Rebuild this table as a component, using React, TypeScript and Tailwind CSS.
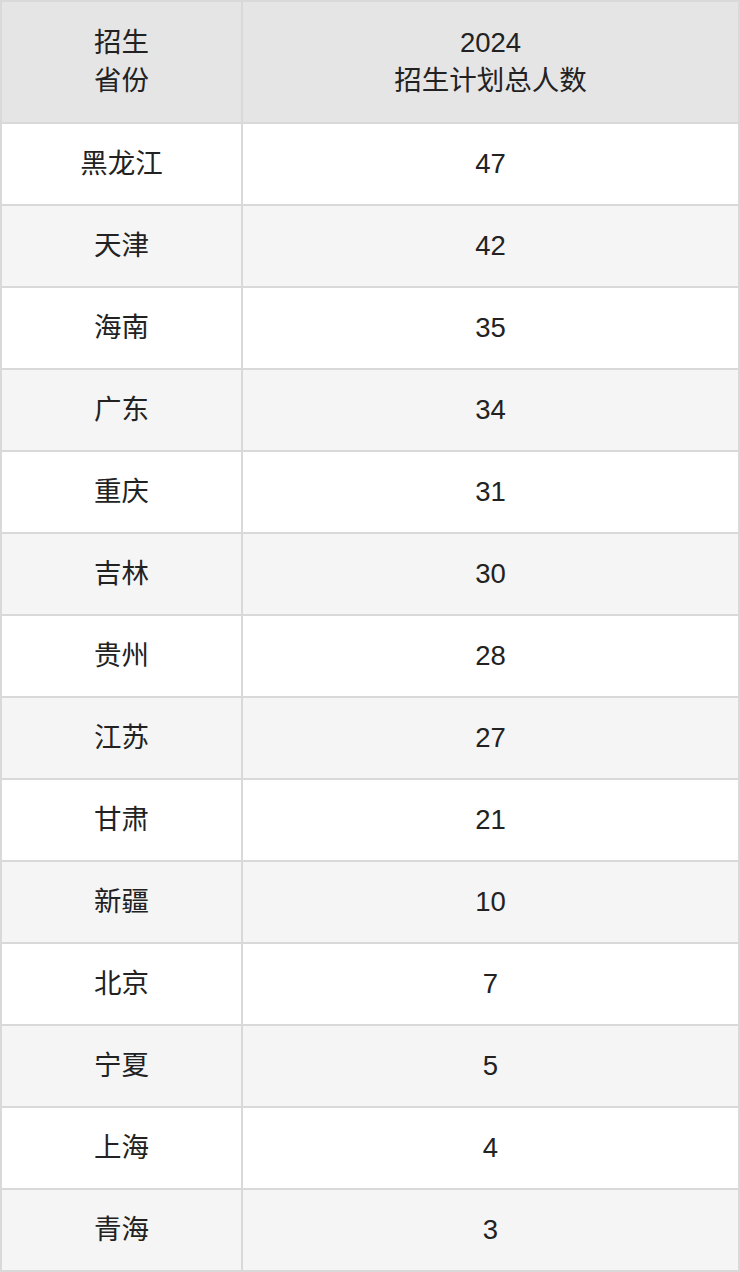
import React from "react";

const rows: [string, string][] = [
  ["黑龙江", "47"],
  ["天津", "42"],
  ["海南", "35"],
  ["广东", "34"],
  ["重庆", "31"],
  ["吉林", "30"],
  ["贵州", "28"],
  ["江苏", "27"],
  ["甘肃", "21"],
  ["新疆", "10"],
  ["北京", "7"],
  ["宁夏", "5"],
  ["上海", "4"],
  ["青海", "3"],
];

export default function App() {
  return (
    <div
      className="w-[740px] bg-white text-[#222] text-[27.5px]"
      style={{ fontFamily: '"Liberation Sans", Arial, "Noto Sans CJK SC", sans-serif' }}
    >
      <div className="grid grid-cols-[239px_495px] gap-[2px] p-[2px] bg-[#d9d9d9]">
        <div className="h-[120px] bg-[#e5e5e5] flex flex-col items-center justify-center leading-[38px]">
          <span>招生</span>
          <span>省份</span>
        </div>
        <div className="h-[120px] bg-[#e5e5e5] flex flex-col items-center justify-center leading-[38px]">
          <span>2024</span>
          <span>招生计划总人数</span>
        </div>
        {rows.map(([p, n], i) => {
          const bg = i % 2 === 0 ? "bg-white" : "bg-[#f5f5f5]";
          return (
            <React.Fragment key={p}>
              <div className={`h-[80px] ${bg} flex items-center justify-center`}>{p}</div>
              <div className={`h-[80px] ${bg} flex items-center justify-center`}>{n}</div>
            </React.Fragment>
          );
        })}
      </div>
    </div>
  );
}
